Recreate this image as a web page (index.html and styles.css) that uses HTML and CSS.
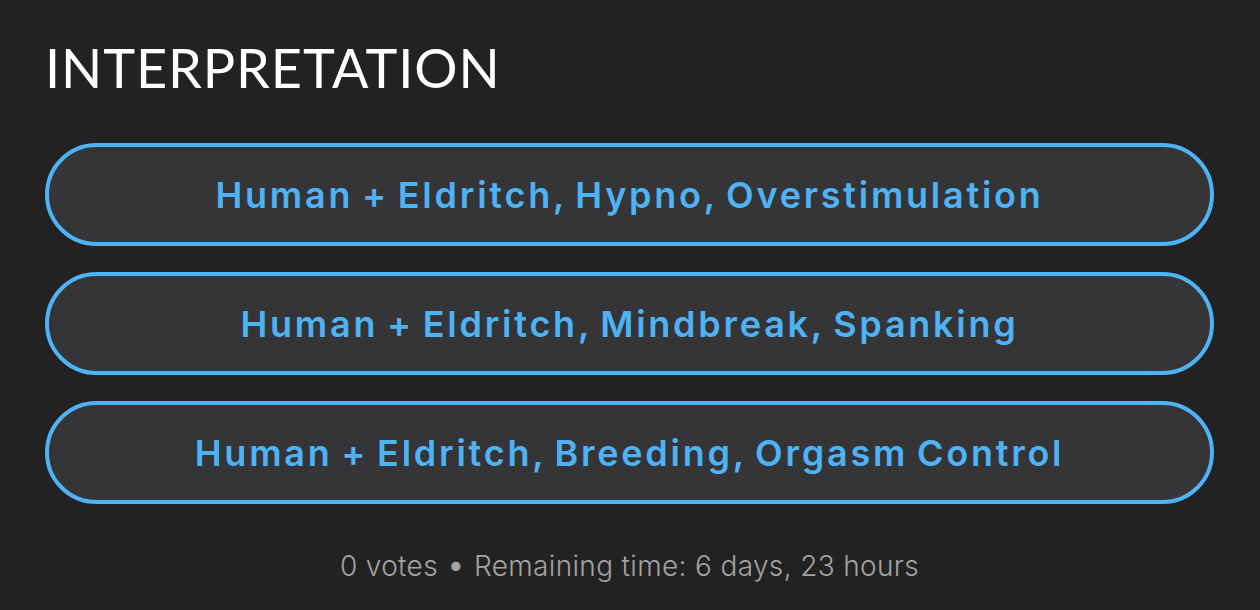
FILE: index.html
```html
<!DOCTYPE html>
<html>
<head>
<meta charset="utf-8">
<link rel="stylesheet" href="styles.css">
</head>
<body>
<div class="poll">
  <h1 class="title">INTERPRETATION</h1>
  <div class="options">
    <button class="option">Human + Eldritch, Hypno, Overstimulation</button>
    <button class="option">Human + Eldritch, Mindbreak, Spanking</button>
    <button class="option">Human + Eldritch, Breeding, Orgasm Control</button>
  </div>
  <div class="meta">0 votes <span class="dot">•</span> Remaining time: 6 days, 23 hours</div>
</div>
</body>
</html>
```
FILE: styles.css
```css
html, body {
  margin: 0;
  padding: 0;
  background: #222222;
}
.poll {
  padding: 38px 46px 0 45px;
  display: flex;
  flex-direction: column;
}
.title {
  margin: 0;
  font-family: Lato, "Liberation Sans", sans-serif;
  font-weight: 400;
  font-size: 54px;
  line-height: 60px;
  color: #ffffff;
  letter-spacing: 0.9px;
}
.options {
  margin-top: 45px;
  display: flex;
  flex-direction: column;
  gap: 26px;
}
.option {
  height: 103px;
  border: 4px solid #4db3f5;
  border-radius: 52px;
  background: #353437;
  color: #4db3f5;
  font-family: Inter, "Liberation Sans", sans-serif;
  font-weight: 600;
  font-size: 36px;
  letter-spacing: 2.75px;
  word-spacing: -3px;
  text-align: center;
  padding: 0;
}
.meta {
  margin-top: 44px;
  text-align: center;
  font-family: Inter, "Liberation Sans", sans-serif;
  font-weight: 300;
  font-size: 28px;
  letter-spacing: 0.35px;
  color: #a3a3a3;
  line-height: 36px;
}
.dot {
  font-size: 34px;
  line-height: 20px;
}
```
